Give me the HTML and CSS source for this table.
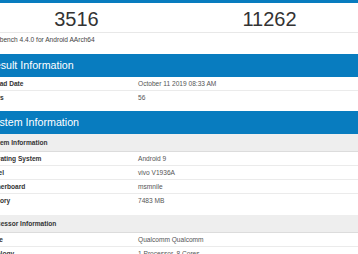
FILE: index.html
```html
<!DOCTYPE html>
<html lang="en">
<head>
    <meta charset="UTF-8">
    <meta name="viewport" content="width=device-width, initial-scale=1.0">
    <title>Geekbench 4 Result</title>
    <link rel="stylesheet" href="styles.css">
</head>
<body>
    <div class="page">
        <div class="section scores-section">
            <div class="score-head"></div>
            <div class="scores">
                <div class="score">3516</div>
                <div class="score">11262</div>
            </div>
            <div class="desc">Geekbench 4.4.0 for Android AArch64</div>
        </div>

        <div class="section">
            <div class="section-title">Result Information</div>
            <div class="group">
                <div class="row"><span class="name">Upload Date</span><span class="value">October 11 2019 08:33 AM</span></div>
                <div class="row"><span class="name">Views</span><span class="value">56</span></div>
            </div>
        </div>

        <div class="section">
            <div class="section-title">System Information</div>
            <div class="group">
                <div class="group-head">System Information</div>
                <div class="row"><span class="name">Operating System</span><span class="value">Android 9</span></div>
                <div class="row"><span class="name">Model</span><span class="value">vivo V1936A</span></div>
                <div class="row"><span class="name">Motherboard</span><span class="value">msmnile</span></div>
                <div class="row"><span class="name">Memory</span><span class="value">7483 MB</span></div>
            </div>
            <div class="group">
                <div class="group-head">Processor Information</div>
                <div class="row"><span class="name">Name</span><span class="value">Qualcomm Qualcomm</span></div>
                <div class="row"><span class="name">Topology</span><span class="value">1 Processor, 8 Cores</span></div>
            </div>
        </div>
    </div>
</body>
</html>
```
FILE: styles.css
```css
body {
    margin: 0;
    background: #fff;
    font-family: 'Liberation Sans', Arial, Helvetica, sans-serif;
    overflow: hidden;
}
.page {
    width: 386px;
    margin-left: -20px;
}
.score-head {
    height: 3px;
    background: #087cbf;
}
.scores {
    display: grid;
    grid-template-columns: 1fr 1fr;
    border-bottom: 1px solid #e8e8e8;
}
.score {
    text-align: center;
    font-size: 20px;
    line-height: 26px;
    padding-top: 3px;
    color: #333;
}
.desc {
    font-size: 6.6px;
    line-height: 14px;
    padding: 0 4px 7px;
    color: #444;
}
.section {
    margin-bottom: 7px;
}
.scores-section {
    margin-bottom: 0;
}
.section-title {
    background: #087cbf;
    color: #fff;
    font-size: 10.7px;
    height: 23px;
    line-height: 23px;
    padding-left: 7px;
}
.group + .group {
    margin-top: 8px;
}
.group-head {
    background: #eee;
    height: 17px;
    line-height: 17px;
    border-bottom: 1px solid #dcdcdc;
    font-size: 6.6px;
    font-weight: bold;
    color: #333;
    padding-left: 6px;
}
.row {
    display: grid;
    grid-template-columns: 158px 1fr;
    height: 13px;
    line-height: 13px;
    border-bottom: 1px solid #ebebeb;
    font-size: 6.6px;
}
.row:last-child {
    border-bottom: none;
}
.name {
    font-weight: bold;
    color: #333;
    padding-left: 5px;
}
.value {
    color: #555;
}
```
